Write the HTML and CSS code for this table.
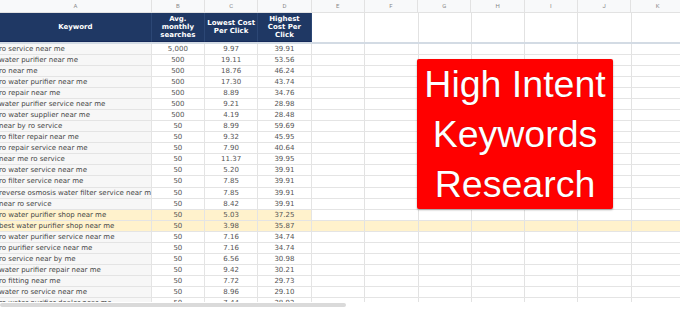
FILE: index.html
```html
<!DOCTYPE html>
<html>
<head>
<meta charset="utf-8">
<link rel="stylesheet" href="styles.css">
</head>
<body>
<div class="sheet">
  <div class="colheads">
    <div class="ch a">A</div><div class="ch">B</div><div class="ch">C</div><div class="ch">D</div><div class="ch">E</div><div class="ch">F</div><div class="ch">G</div><div class="ch">H</div><div class="ch">I</div><div class="ch">J</div><div class="ch">K</div>
  </div>
  <div class="hdr">
    <div class="hc a">Keyword</div>
    <div class="hc">Avg.<br>monthly<br>searches</div>
    <div class="hc">Lowest Cost<br>Per Click</div>
    <div class="hc">Highest<br>Cost Per<br>Click</div>
    <div class="rest"></div>
  </div>
  <div class="freeze"></div>
  <div class="rows">
    <div class="row"><div class="c kw">ro service near me</div><div class="c">5,000</div><div class="c">9.97</div><div class="c">39.91</div><div class="rest"></div></div>
    <div class="row"><div class="c kw">water purifier near me</div><div class="c">500</div><div class="c">19.11</div><div class="c">53.56</div><div class="rest"></div></div>
    <div class="row"><div class="c kw">ro near me</div><div class="c">500</div><div class="c">18.76</div><div class="c">46.24</div><div class="rest"></div></div>
    <div class="row"><div class="c kw">ro water purifier near me</div><div class="c">500</div><div class="c">17.30</div><div class="c">43.74</div><div class="rest"></div></div>
    <div class="row"><div class="c kw">ro repair near me</div><div class="c">500</div><div class="c">8.89</div><div class="c">34.76</div><div class="rest"></div></div>
    <div class="row"><div class="c kw">water purifier service near me</div><div class="c">500</div><div class="c">9.21</div><div class="c">28.98</div><div class="rest"></div></div>
    <div class="row"><div class="c kw">ro water supplier near me</div><div class="c">500</div><div class="c">4.19</div><div class="c">28.48</div><div class="rest"></div></div>
    <div class="row"><div class="c kw">near by ro service</div><div class="c">50</div><div class="c">8.99</div><div class="c">59.69</div><div class="rest"></div></div>
    <div class="row"><div class="c kw">ro filter repair near me</div><div class="c">50</div><div class="c">9.32</div><div class="c">45.95</div><div class="rest"></div></div>
    <div class="row"><div class="c kw">ro repair service near me</div><div class="c">50</div><div class="c">7.90</div><div class="c">40.64</div><div class="rest"></div></div>
    <div class="row"><div class="c kw">near me ro service</div><div class="c">50</div><div class="c">11.37</div><div class="c">39.95</div><div class="rest"></div></div>
    <div class="row"><div class="c kw">ro water service near me</div><div class="c">50</div><div class="c">5.20</div><div class="c">39.91</div><div class="rest"></div></div>
    <div class="row"><div class="c kw">ro filter service near me</div><div class="c">50</div><div class="c">7.85</div><div class="c">39.91</div><div class="rest"></div></div>
    <div class="row"><div class="c kw">reverse osmosis water filter service near me</div><div class="c">50</div><div class="c">7.85</div><div class="c">39.91</div><div class="rest"></div></div>
    <div class="row"><div class="c kw">near ro service</div><div class="c">50</div><div class="c">8.42</div><div class="c">39.91</div><div class="rest"></div></div>
    <div class="row hl-part"><div class="c kw">ro water purifier shop near me</div><div class="c">50</div><div class="c">5.03</div><div class="c">37.25</div><div class="rest"></div></div>
    <div class="row hl-full"><div class="c kw">best water purifier shop near me</div><div class="c">50</div><div class="c">3.98</div><div class="c">35.87</div><div class="rest"></div></div>
    <div class="row"><div class="c kw">ro water purifier service near me</div><div class="c">50</div><div class="c">7.16</div><div class="c">34.74</div><div class="rest"></div></div>
    <div class="row"><div class="c kw">ro purifier service near me</div><div class="c">50</div><div class="c">7.16</div><div class="c">34.74</div><div class="rest"></div></div>
    <div class="row"><div class="c kw">ro service near by me</div><div class="c">50</div><div class="c">6.56</div><div class="c">30.98</div><div class="rest"></div></div>
    <div class="row"><div class="c kw">water purifier repair near me</div><div class="c">50</div><div class="c">9.42</div><div class="c">30.21</div><div class="rest"></div></div>
    <div class="row"><div class="c kw">ro fitting near me</div><div class="c">50</div><div class="c">7.72</div><div class="c">29.73</div><div class="rest"></div></div>
    <div class="row"><div class="c kw">water ro service near me</div><div class="c">50</div><div class="c">8.96</div><div class="c">29.10</div><div class="rest"></div></div>
    <div class="row"><div class="c kw">ro water purifier dealer near me</div><div class="c">50</div><div class="c">7.44</div><div class="c">28.92</div><div class="rest"></div></div>
  </div>
  <div class="hscroll"><div class="thumb"></div></div>
  <div class="badge">High Intent<br>Keywords<br>Research</div>
</div>
</body>
</html>
```

FILE: styles.css
```css
* { box-sizing: border-box; }
html, body { margin: 0; padding: 0; background: #fff; }
body { width: 680px; height: 309px; overflow: hidden; }

.sheet {
  position: relative;
  width: 680px;
  height: 309px;
  overflow: hidden;
  display: flex;
  flex-direction: column;
  font-family: "DejaVu Sans", Verdana, sans-serif;
}

.colheads {
  display: flex;
  height: 13.3px;
  flex: none;
  background: #f8f9fa;
  border-bottom: 1px solid #e2e2e2;
}
.ch {
  width: 53.3px;
  flex: none;
  border-right: 1px solid #e2e2e2;
  font-family: Roboto, "Liberation Sans", sans-serif;
  font-size: 6px;
  color: #8a8a8a;
  text-align: center;
  line-height: 12.3px;
}
.ch.a { width: 151.7px; }

.hdr {
  display: flex;
  height: 28.4px;
  flex: none;
}
.hc {
  width: 53.3px;
  flex: none;
  background: #1f3864;
  color: #fff;
  font-weight: bold;
  font-size: 7px;
  line-height: 8px;
  text-align: center;
  display: flex;
  align-items: center;
  justify-content: center;
  border-right: 1px solid #2c4775;
  border-bottom: 1px solid #15295a;
}
.hc.a { width: 151.7px; }

.rest {
  flex: 1;
  background-image: repeating-linear-gradient(to right, transparent 0, transparent 52.3px, #e2e2e2 52.3px, #e2e2e2 53.3px);
}

.freeze {
  height: 2px;
  flex: none;
  background: #d3dbe4;
}

.rows {
  height: 258px;
  flex: none;
  overflow: hidden;
}
.row {
  display: flex;
  height: 11.07px;
  border-bottom: 1px solid #e4e4e4;
}
.c {
  width: 53.3px;
  flex: none;
  border-right: 1px solid #e4e4e4;
  font-size: 7px;
  line-height: 10px;
  color: #555;
  text-align: center;
  white-space: nowrap;
  overflow: hidden;
}
.c.kw {
  width: 151.7px;
  text-align: left;
  text-indent: -1px;
  color: #444;
  background: #f7f7f7;
}

.hl-part .c, .hl-part .c.kw { background: #fff2cc; }
.hl-full, .hl-full .c, .hl-full .c.kw { background-color: #fff2cc; }

.hscroll {
  flex: 1;
  padding-top: 1.5px;
}
.thumb {
  width: 346px;
  height: 4px;
  border-radius: 2px;
  background: #dadada;
}

.badge {
  position: absolute;
  left: 417px;
  top: 59px;
  width: 196px;
  height: 150px;
  background: #ff0000;
  border-radius: 2px;
  box-shadow: 0 1px 2px rgba(0,0,0,0.35);
  color: #fff;
  font-family: "Liberation Sans", Arial, sans-serif;
  font-size: 37.5px;
  line-height: 50px;
  text-align: center;
  text-shadow: 0 0 1px rgba(90,0,0,0.6);
}
```
